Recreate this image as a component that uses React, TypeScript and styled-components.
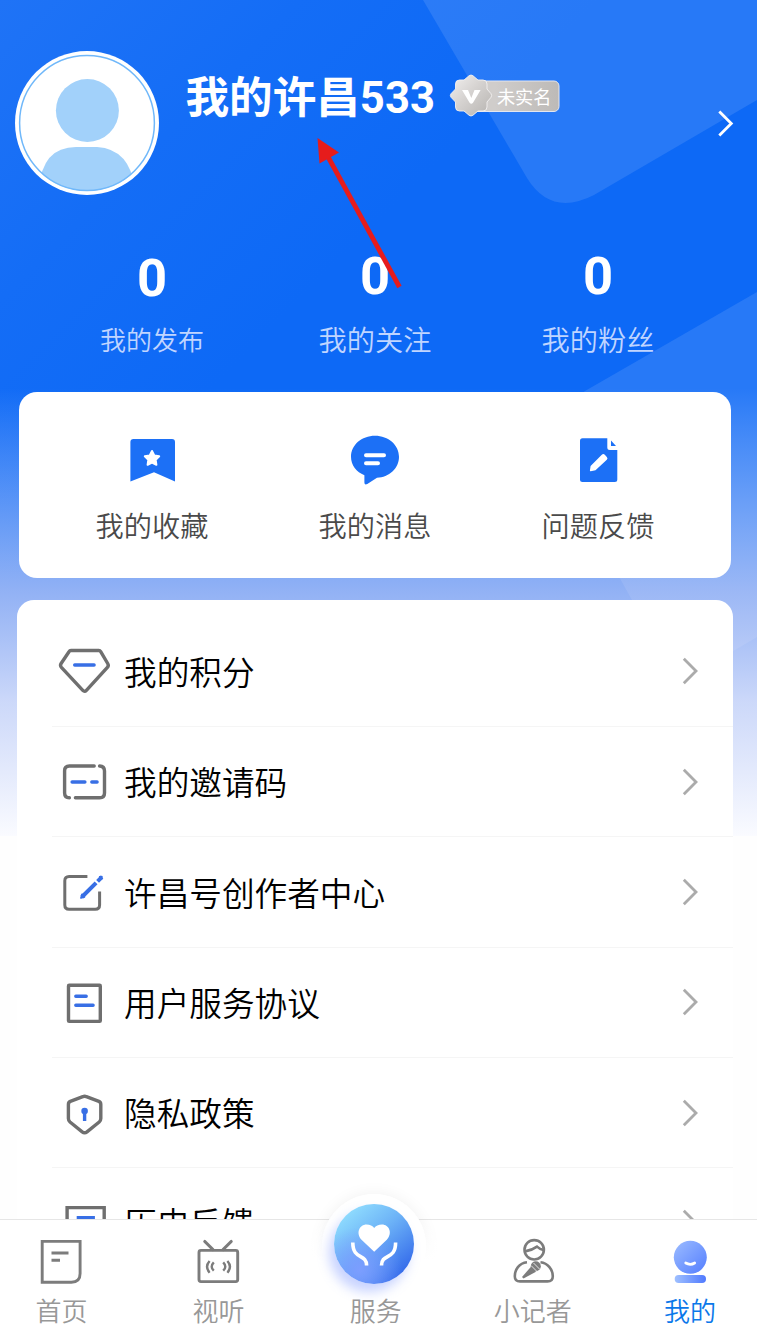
import React from "react";
import styled, { createGlobalStyle } from "styled-components";

const GlobalStyle = createGlobalStyle`
  * { box-sizing: border-box; }
  body { margin: 0; background: #fff; }
`;

const Page = styled.div`
  position: relative;
  width: 757px;
  height: 1330px;
  overflow: hidden;
  display: flex;
  flex-direction: column;
  background: #fefefe;
  font-family: Roboto, "Noto Sans CJK SC", sans-serif;
`;

const Backdrop = styled.svg`
  position: absolute;
  left: 0;
  top: 0;
`;

const Annotation = styled.svg`
  position: absolute;
  left: 310px;
  top: 130px;
  z-index: 3;
`;

const Scroll = styled.main`
  position: relative;
  flex: 0 0 1219px;
  overflow: hidden;
`;

const Profile = styled.section`
  display: flex;
  align-items: flex-start;
  height: 195px;
  padding: 51px 22px 0 15px;
`;

const Name = styled.h1`
  margin: 16px 0 0 26.5px;
  font-size: 43.6px;
  line-height: 64px;
  font-weight: 700;
  color: #fff;
  white-space: nowrap;
`;

const Badge = styled.div`
  position: relative;
  width: 112px;
  height: 45px;
  margin: 22px 0 0 14.5px;
  padding-left: 47.5px;
  font-size: 18.2px;
  line-height: 49px;
  color: #fff;
  white-space: nowrap;
  svg { position: absolute; left: 0; top: 0; }
  span { position: relative; }
`;

const ProfileArrow = styled.svg`
  margin: 58px 0 0 auto;
`;

const Columns = styled.div`
  display: grid;
  grid-template-columns: repeat(3, 223px);
  justify-content: center;
`;

const Stats = styled(Columns)`
  height: 197px;
  padding: 51px 7px 0 0;
`;

const Stat = styled.div<{ $small?: boolean }>`
  display: flex;
  flex-direction: column;
  align-items: center;
  padding-top: ${(p) => (p.$small ? "2px" : "0")};
  strong {
    font-size: 52.5px;
    line-height: 60px;
    font-weight: 700;
    color: #fff;
  }
  span {
    margin-top: ${(p) => (p.$small ? "13px" : "16px")};
    font-size: ${(p) => (p.$small ? 26 : 28.2)}px;
    line-height: 40px;
    font-weight: 350;
    color: #c0d5ff;
  }
`;

const QuickCard = styled(Columns)`
  width: 712px;
  height: 185.5px;
  margin-left: 19px;
  padding-top: 40px;
  border-radius: 18px;
  background: #fff;
`;

const Quick = styled.div`
  display: flex;
  flex-direction: column;
  align-items: center;
  span {
    margin-top: 20px;
    font-size: 28.2px;
    line-height: 40px;
    font-weight: 350;
    color: #4a4a4a;
  }
`;

const MenuCard = styled.section`
  width: 716px;
  margin: 22px 0 0 17px;
  padding: 17.3px 0 0 35px;
  border-radius: 17px 17px 0 0;
  background: #fff;
`;

const MenuRow = styled.div`
  display: flex;
  align-items: center;
  height: 110.3px;
  padding: 0 34px 0 4px;
  border-bottom: 1.5px solid #f5f5f5;
  font-size: 32.65px;
  font-weight: 350;
  color: #000;
  span { margin-left: 12px; padding-top: 5px; line-height: 48px; }
  svg:last-child { margin-left: auto; }
`;

const TabBar = styled.nav`
  position: relative;
  display: flex;
  justify-content: space-between;
  height: 111px;
  padding: 18px 17px 0 11.5px;
  border-top: 1px solid #e6e6e6;
  background: #fff;
`;

const Tab = styled.div<{ $active?: boolean }>`
  display: flex;
  flex-direction: column;
  align-items: center;
  width: 100px;
  font-size: 26px;
  font-weight: 350;
  color: ${(p) => (p.$active ? "#0b78ea" : "#989898")};
  white-space: nowrap;
  > svg { flex-shrink: 0; }
  > span { margin-top: 7px; line-height: 38px; position: relative; }
`;

const ServiceSlot = styled.div`
  position: relative;
  flex-shrink: 0;
  width: 48px;
  height: 48px;
`;

const Disc = styled.div`
  position: absolute;
  left: -30px;
  top: -44px;
  width: 104px;
  height: 104px;
  padding: 9.5px 12px;
  border-radius: 50%;
  background: #fff;
`;

const Halo = styled(Disc)`
  box-shadow: 0 0 16px rgba(0, 0, 0, 0.06);
`;

const HaloFade = styled.div`
  position: absolute;
  left: -52px;
  top: -18px;
  width: 148px;
  height: 90px;
  background: linear-gradient(#fff0, #fff 40px);
`;

const ServiceButton = styled.div`
  width: 80px;
  height: 80px;
  border-radius: 50%;
  background: radial-gradient(circle at 32% 82%, #7c9eff 0%, #7c9eff00 50%),
    linear-gradient(140deg, #94e2ff 8%, #6cb2f7 45%, #3268ea 88%);
  box-shadow: -5px 8px 12px rgba(110, 140, 255, 0.38);
`;

const gray = "#6f6f6f";
const blue = "#386fe5";
const solid = "#1c70f6";

const MenuIcon = ({ children }: { children: React.ReactNode }) => (
  <svg width="56" height="56" viewBox="0 0 56 56" fill="none" stroke={gray} strokeWidth="3.4" strokeLinecap="round" strokeLinejoin="round">
    <g transform="translate(.4 0)">{children}</g>
  </svg>
);

const Chevron = () => (
  <svg width="17" height="28" viewBox="0 0 17 28" fill="none" stroke="#ababab" strokeWidth="2.8">
    <path d="M1.8 1.8 14 14 1.8 26.2" />
  </svg>
);

const menu = [
  { label: "我的积分", icon: <><path d="M14.6 7.5H42.4Q43.6 7.5 44.3 8.7L51.3 20.5Q52.6 22.6 51 24.4L30 47.3Q28.2 49.2 26.4 47.3L5 24.4Q3.4 22.6 4.7 20.5L12.6 8.7Q13.3 7.5 14.6 7.5Z" /><path stroke={blue} d="M18.3 22H37.7" /></> },
  { label: "我的邀请码", icon: <><path d="M37.8 12H13Q8.2 12 8.2 16.8V39Q8.2 43.8 13 43.8M43.2 12Q48.1 12.2 48.1 17V39Q48.1 43.8 43.3 43.8H19" /><path stroke={blue} d="M15.7 28H28.5M35.4 28H40.7" /></> },
  { label: "许昌号创作者中心", icon: <><path strokeWidth="3" strokeLinecap="butt" d="M31 12.4H12.7Q8.4 12.4 8.4 16.7V41Q8.4 45.3 12.7 45.3H38.9Q43.2 45.3 43.2 41V27.6" /><path stroke={blue} strokeWidth="4" strokeLinecap="butt" d="M25.5 33 39.7 18.8M41.2 17.3 45.5 13" /><path stroke={blue} strokeWidth="1.8" fill={blue} d="M24.6 33.9 25.6 30.4 28 32.8ZM43.4 12.8 45.4 12.6 45.2 15Z" /></> },
  { label: "用户服务协议", icon: <><rect x="12.1" y="11.2" width="31.8" height="36.2" rx=".7" /><path stroke={blue} d="M19.4 22.3H29.8M19.4 31.3H36.7" /></> },
  { label: "隐私政策", icon: <><path d="M26.4 11.7Q28.2 10.8 30 11.7L42.5 16.4Q44.4 17.3 44.4 19.4V33.5Q44.4 35.6 42.8 37L30.6 46.8Q28.2 48.7 25.8 46.8L13.6 37Q12 35.6 12 33.5V19.4Q12 17.3 13.9 16.4Z" /><circle cx="28.2" cy="26" r="3.3" fill={blue} stroke="none" /><path stroke={blue} strokeLinecap="butt" d="M28.2 26V36" /></> },
  { label: "历史反馈", icon: <><path strokeLinejoin="miter" d="M10.7 12.6H47.8V48H10.7Z" /><path stroke={blue} strokeLinecap="butt" d="M20.3 22.6H38.5M20.3 31.5H38.5" /></> },
];

const TabIcon = ({ children }: { children: React.ReactNode }) => (
  <svg width="48" height="48" viewBox="0 0 48 48" fill="none" stroke="#7c7c7c" strokeWidth="2.9">
    {children}
  </svg>
);

export default function App() {
  return (
    <Page>
      <GlobalStyle />
      <Backdrop width="757" height="836" viewBox="0 0 757 836">
        <defs>
          <linearGradient id="base" x1="0" y1="0" x2="300" y2="300" gradientUnits="userSpaceOnUse">
            <stop offset="0" stopColor="#1f73f6" />
            <stop offset=".5" stopColor="#146df6" />
            <stop offset="1" stopColor="#0d69f6" />
          </linearGradient>
          <linearGradient id="fade" x1="0" y1="0" x2="0" y2="1">
            <stop offset="0" stopColor="#f0eefa" stopOpacity="0" />
            <stop offset=".2" stopColor="#ebe8f8" stopOpacity=".27" />
            <stop offset=".45" stopColor="#e5dff4" stopOpacity=".61" />
            <stop offset=".7" stopColor="#f3effa" stopOpacity=".83" />
            <stop offset="1" stopColor="#fafbff" />
          </linearGradient>
        </defs>
        <path fill="url(#base)" d="M0 0H757V836H0Z" />
        <path fill="#fff" fillOpacity=".11" d="M423 0H757V100L594 195Q551 217 527 178Z" />
        <path fill="#fff" fillOpacity=".11" d="M757 292 585 391Q553 410 565 480L632 600Q665 690 735 650L757 637Z" />
        <path fill="url(#fade)" d="M0 388H757V836H0Z" />
      </Backdrop>

      <Scroll>
        <Profile>
          <svg width="144" height="144" viewBox="0 0 144 144">
            <clipPath id="face"><circle cx="72" cy="72" r="68" /></clipPath>
            <circle cx="72" cy="72" r="72" fill="#fff" />
            <g fill="#a2d1fa" clipPath="url(#face)">
              <circle cx="72.4" cy="59.5" r="31.5" />
              <path d="M24 144V138Q27 96 61 96H82Q115 98 120 138V144Z" />
            </g>
            <circle cx="72" cy="72" r="67.4" fill="none" stroke="#70b8fa" strokeWidth="1.5" />
          </svg>
          <Name>我的许昌533</Name>
          <Badge>
            <svg width="112" height="45" viewBox="0 0 112 45">
              <defs>
                <linearGradient id="silver" x1="0" y1="0" x2="1" y2="1">
                  <stop offset="0" stopColor="#f3f1f0" />
                  <stop offset=".45" stopColor="#d6d3d1" />
                  <stop offset="1" stopColor="#b6b3b0" />
                </linearGradient>
                <linearGradient id="pill"><stop offset=".3" stopColor="#d0cdcb" /><stop offset="1" stopColor="#bdbab7" /></linearGradient>
              </defs>
              <rect x="18" y="8" width="92" height="30.5" rx="5" fill="url(#pill)" stroke="#e3e6f0" />
              <path fill="url(#silver)" stroke="#f3f1f1" strokeWidth=".9" strokeLinejoin="round" d="M15 7 20 2.8Q22 1.2 24 2.8L29 7H34Q38 7 38 11V16L42 20.7Q43.2 22.5 42 24.3L38 29V34Q38 38 34 38H29L24 42.2Q22 43.8 20 42.2L15 38H10.5Q6.5 38 6.5 34V29L2 24.3Q.7 22.5 2 20.7L6.5 16V11Q6.5 7 10.5 7Z" />
              <path fill="#fff" d="M13 17H19L22.3 25 25.5 17H31.6L24 29.7Q22.3 32 20.6 29.7Z" />
            </svg>
            <span>未实名</span>
          </Badge>
          <ProfileArrow width="18" height="30" viewBox="0 0 18 30" fill="none" stroke="#fff" strokeWidth="2.8">
            <path d="M2.3 2.5 14.3 14.5 2.3 26.5" />
          </ProfileArrow>
        </Profile>

        <Stats>
          <Stat $small><strong>0</strong><span>我的发布</span></Stat>
          <Stat><strong>0</strong><span>我的关注</span></Stat>
          <Stat><strong>0</strong><span>我的粉丝</span></Stat>
        </Stats>

        <QuickCard>
          <Quick>
            <svg width="56" height="56" viewBox="0 0 56 56">
              <path fill={solid} d="M9.5 7H48Q51 7 51 10V49.4L30 40.3 6.4 49.4V10Q6.4 7 9.5 7Z" />
              <path fill="#fff" stroke="#fff" strokeWidth="2" strokeLinejoin="round" d="M28 19 30.3 23.4 35.2 24.3 31.7 27.8 32.4 32.8 28 30.6 23.6 32.8 24.3 27.8 20.8 24.3 25.7 23.4Z" />
            </svg>
            <span>我的收藏</span>
          </Quick>
          <Quick>
            <svg width="56" height="56" viewBox="0 0 56 56">
              <path fill={solid} d="M28 3.7C41.4 3.7 52 13 52 24.8 52 36.5 42 45.3 30 45.8L20.3 52Q17.4 53.3 17.4 50.5V43.3C9.4 40 4 33.3 4 24.8 4 13 14.6 3.7 28 3.7Z" />
              <path stroke="#fff" strokeWidth="4" strokeLinecap="round" d="M19 23.3H37M19 31.3H31" />
            </svg>
            <span>我的消息</span>
          </Quick>
          <Quick>
            <svg width="56" height="56" viewBox="0 0 56 56">
              <path fill={solid} d="M12.5 6.3H37.3V15.5Q37.3 18 39.8 18H47.3V47.5Q47.3 50 44.8 50H12.5Q10 50 10 47.5V8.8Q10 6.3 12.5 6.3ZM41 8.5 46 14H41Z" />
              <path fill="#fff" d="M31.8 22.8Q33.3 21.4 34.8 22.8L36.8 24.9Q38.2 26.4 36.8 27.8L25.5 38.2 20.8 39.2Q19.9 39.4 19.9 38.5L20.6 34Z" />
            </svg>
            <span>问题反馈</span>
          </Quick>
        </QuickCard>

        <MenuCard>
          {menu.map((m) => (
            <MenuRow key={m.label}>
              <MenuIcon>{m.icon}</MenuIcon>
              <span>{m.label}</span>
              <Chevron />
            </MenuRow>
          ))}
        </MenuCard>
      </Scroll>

      <TabBar>
        <Tab>
          <TabIcon>
            <path d="M4.2 3.4H42.1V35.5Q42.1 44.2 33.4 44.2H4.2ZM13.5 15H30.5M13.5 22.3H22" />
          </TabIcon>
          <span>首页</span>
        </Tab>
        <Tab>
          <TabIcon>
            <rect x="4" y="12.4" width="38.7" height="31.2" rx="2" />
            <path strokeLinecap="round" d="M9.7 3.4 18 11.6M36.3 3.4 28 11.6" />
            <path strokeWidth="2.4" d="M14.6 23Q9.5 28.7 14.6 34.7M18.8 24.4Q14.6 28.7 18.8 32.7M32.4 23Q37.5 28.7 32.4 34.7M28.2 24.4Q32.4 28.7 28.2 32.7" />
          </TabIcon>
          <span>视听</span>
        </Tab>
        <Tab>
          <ServiceSlot>
            <Halo />
            <HaloFade />
            <Disc>
              <ServiceButton>
                <svg width="80" height="80" viewBox="0 0 80 80" fill="none">
                  <path fill="#fff" d="M40.2 47.7 27.5 35.8C21.5 29.2 25.5 20.6 32.5 20.6 36 20.6 38.7 21.8 40.2 24 41.8 21.8 44.5 20.6 48 20.6 55 20.6 59 29.2 52.8 35.8Z" />
                  <path stroke="#fff" strokeWidth="3.6" d="M18.8 38.5C18.8 56.5 32.6 49 32.6 61.5M61.6 38.5C61.6 56.5 47.5 49 47.5 61.5" />
                </svg>
              </ServiceButton>
            </Disc>
          </ServiceSlot>
          <span>服务</span>
        </Tab>
        <Tab>
          <TabIcon>
            <g strokeWidth="2.6">
              <circle cx="25.2" cy="11.8" r="9.7" />
              <path d="M16 13.4C20 12.8 24 11.5 28 8.6 30 10.5 32.5 11.6 35 12.3M18 24.2C10 25 5.8 31.8 5.8 38.2Q5.8 43.4 11 43.4H38.5Q43.8 43.4 43.8 38.2C43.8 31.8 39 25 31.5 24.2" />
            </g>
            <circle cx="26.8" cy="28.2" r="5" fill="#7c7c7c" stroke="none" />
            <path fill="#7c7c7c" stroke="none" d="M22 28.7 27 33.8 14.5 40.5 13 39Z" />
            <path stroke="#fff" strokeWidth=".8" d="M22 27.5 28 33.5M24.5 25 30.5 31" />
          </TabIcon>
          <span>小记者</span>
        </Tab>
        <Tab $active>
          <TabIcon>
            <defs>
              <linearGradient id="head" x1="0" y1="0" x2="1" y2="1"><stop stopColor="#9cbcff" /><stop offset="1" stopColor="#547eff" /></linearGradient>
              <linearGradient id="neck"><stop stopColor="#9fc0ff" /><stop offset="1" stopColor="#507aff" /></linearGradient>
            </defs>
            <circle cx="24.3" cy="19.3" r="16.5" fill="url(#head)" stroke="none" />
            <rect x="8.7" y="37" width="31.3" height="8" rx="4" fill="url(#neck)" stroke="none" />
            <path stroke="#fff" strokeWidth="2.7" strokeLinecap="round" d="M19.7 25Q24.3 27.6 28.7 25" />
          </TabIcon>
          <span>我的</span>
        </Tab>
      </TabBar>

      <Annotation width="100" height="165" viewBox="0 0 100 165">
        <path d="M17 25 89.5 157" stroke="#e61c1c" strokeWidth="4.8" />
        <path d="M7.5 8 29 22.5 9.5 33.5Z" fill="#e61c1c" />
      </Annotation>
    </Page>
  );
}
